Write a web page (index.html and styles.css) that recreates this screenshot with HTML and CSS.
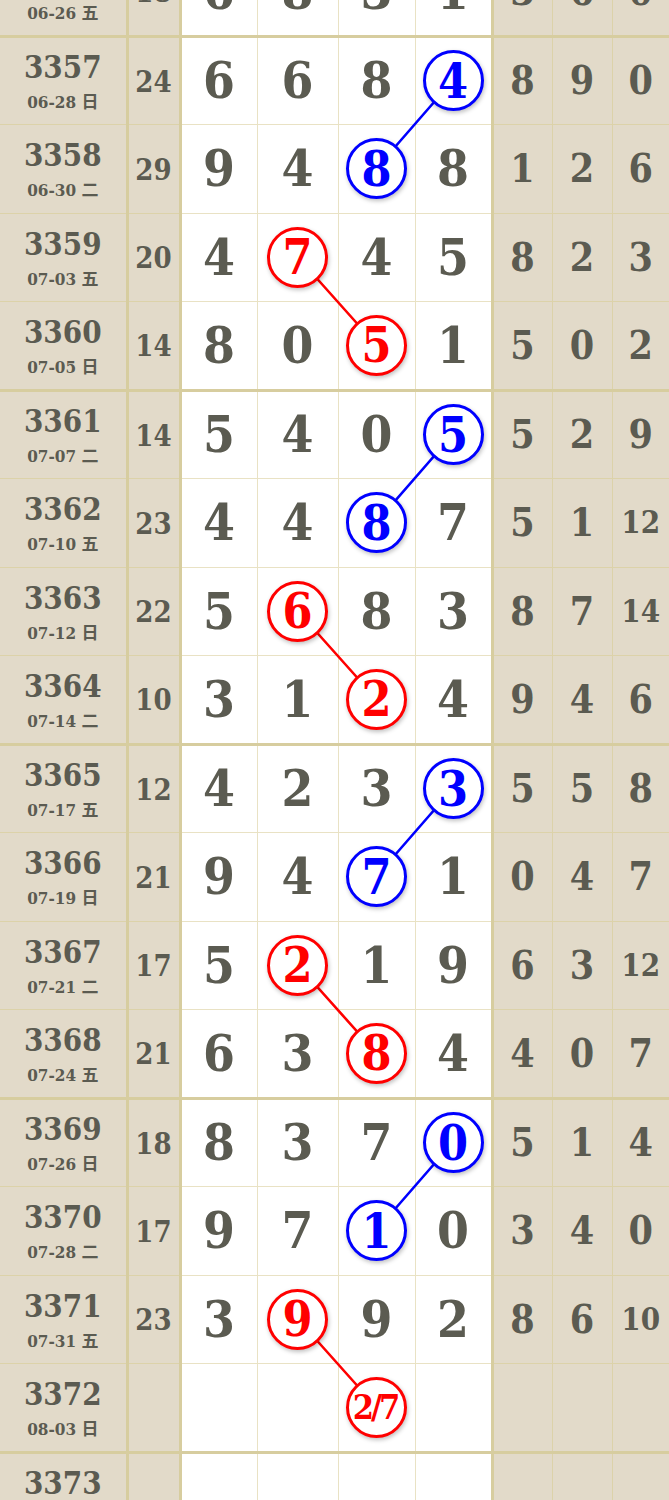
FILE: index.html
```html
<!DOCTYPE html>
<html lang="zh">
<head>
<meta charset="utf-8">
<title>走势图</title>
<link rel="stylesheet" href="styles.css">
</head>
<body>
<div class="viewport">
  <div class="board">
    <table class="chart">
      <colgroup>
        <col class="c-issue"><col class="c-sum"><col class="c-a"><col class="c-b"><col class="c-c"><col class="c-d"><col class="c-e"><col class="c-f"><col class="c-g">
      </colgroup>
      <tbody>
        <tr class="g"><td class="issue"><div class="no">3356</div><div class="dt">06-26 <span class="wk">五</span></div></td><td class="sum">18</td><td class="n">6</td><td class="n">8</td><td class="n">3</td><td class="n">1</td><td class="r">3</td><td class="r">6</td><td class="r">0</td></tr>
        <tr><td class="issue"><div class="no">3357</div><div class="dt">06-28 <span class="wk">日</span></div></td><td class="sum">24</td><td class="n">6</td><td class="n">6</td><td class="n">8</td><td class="n"><span class="ball blue">4</span></td><td class="r">8</td><td class="r">9</td><td class="r">0</td></tr>
        <tr><td class="issue"><div class="no">3358</div><div class="dt">06-30 <span class="wk">二</span></div></td><td class="sum">29</td><td class="n">9</td><td class="n">4</td><td class="n"><span class="ball blue">8</span></td><td class="n">8</td><td class="r">1</td><td class="r">2</td><td class="r">6</td></tr>
        <tr><td class="issue"><div class="no">3359</div><div class="dt">07-03 <span class="wk">五</span></div></td><td class="sum">20</td><td class="n">4</td><td class="n"><span class="ball red">7</span></td><td class="n">4</td><td class="n">5</td><td class="r">8</td><td class="r">2</td><td class="r">3</td></tr>
        <tr class="g"><td class="issue"><div class="no">3360</div><div class="dt">07-05 <span class="wk">日</span></div></td><td class="sum">14</td><td class="n">8</td><td class="n">0</td><td class="n"><span class="ball red">5</span></td><td class="n">1</td><td class="r">5</td><td class="r">0</td><td class="r">2</td></tr>
        <tr><td class="issue"><div class="no">3361</div><div class="dt">07-07 <span class="wk">二</span></div></td><td class="sum">14</td><td class="n">5</td><td class="n">4</td><td class="n">0</td><td class="n"><span class="ball blue">5</span></td><td class="r">5</td><td class="r">2</td><td class="r">9</td></tr>
        <tr><td class="issue"><div class="no">3362</div><div class="dt">07-10 <span class="wk">五</span></div></td><td class="sum">23</td><td class="n">4</td><td class="n">4</td><td class="n"><span class="ball blue">8</span></td><td class="n">7</td><td class="r">5</td><td class="r">1</td><td class="r two">12</td></tr>
        <tr><td class="issue"><div class="no">3363</div><div class="dt">07-12 <span class="wk">日</span></div></td><td class="sum">22</td><td class="n">5</td><td class="n"><span class="ball red">6</span></td><td class="n">8</td><td class="n">3</td><td class="r">8</td><td class="r">7</td><td class="r two">14</td></tr>
        <tr class="g"><td class="issue"><div class="no">3364</div><div class="dt">07-14 <span class="wk">二</span></div></td><td class="sum">10</td><td class="n">3</td><td class="n">1</td><td class="n"><span class="ball red">2</span></td><td class="n">4</td><td class="r">9</td><td class="r">4</td><td class="r">6</td></tr>
        <tr><td class="issue"><div class="no">3365</div><div class="dt">07-17 <span class="wk">五</span></div></td><td class="sum">12</td><td class="n">4</td><td class="n">2</td><td class="n">3</td><td class="n"><span class="ball blue">3</span></td><td class="r">5</td><td class="r">5</td><td class="r">8</td></tr>
        <tr><td class="issue"><div class="no">3366</div><div class="dt">07-19 <span class="wk">日</span></div></td><td class="sum">21</td><td class="n">9</td><td class="n">4</td><td class="n"><span class="ball blue">7</span></td><td class="n">1</td><td class="r">0</td><td class="r">4</td><td class="r">7</td></tr>
        <tr><td class="issue"><div class="no">3367</div><div class="dt">07-21 <span class="wk">二</span></div></td><td class="sum">17</td><td class="n">5</td><td class="n"><span class="ball red">2</span></td><td class="n">1</td><td class="n">9</td><td class="r">6</td><td class="r">3</td><td class="r two">12</td></tr>
        <tr class="g"><td class="issue"><div class="no">3368</div><div class="dt">07-24 <span class="wk">五</span></div></td><td class="sum">21</td><td class="n">6</td><td class="n">3</td><td class="n"><span class="ball red">8</span></td><td class="n">4</td><td class="r">4</td><td class="r">0</td><td class="r">7</td></tr>
        <tr><td class="issue"><div class="no">3369</div><div class="dt">07-26 <span class="wk">日</span></div></td><td class="sum">18</td><td class="n">8</td><td class="n">3</td><td class="n">7</td><td class="n"><span class="ball blue">0</span></td><td class="r">5</td><td class="r">1</td><td class="r">4</td></tr>
        <tr><td class="issue"><div class="no">3370</div><div class="dt">07-28 <span class="wk">二</span></div></td><td class="sum">17</td><td class="n">9</td><td class="n">7</td><td class="n"><span class="ball blue">1</span></td><td class="n">0</td><td class="r">3</td><td class="r">4</td><td class="r">0</td></tr>
        <tr><td class="issue"><div class="no">3371</div><div class="dt">07-31 <span class="wk">五</span></div></td><td class="sum">23</td><td class="n">3</td><td class="n"><span class="ball red">9</span></td><td class="n">9</td><td class="n">2</td><td class="r">8</td><td class="r">6</td><td class="r two">10</td></tr>
        <tr class="g"><td class="issue"><div class="no">3372</div><div class="dt">08-03 <span class="wk">日</span></div></td><td class="sum"></td><td class="n"></td><td class="n"></td><td class="n"><span class="ball red pair">2/7</span></td><td class="n"></td><td class="r"></td><td class="r"></td><td class="r"></td></tr>
        <tr><td class="issue"><div class="no">3373</div><div class="dt">08-05 <span class="wk">二</span></div></td><td class="sum"></td><td class="n"></td><td class="n"></td><td class="n"></td><td class="n"></td><td class="r"></td><td class="r"></td><td class="r"></td></tr>
      </tbody>
    </table>
    <svg class="links" width="669" height="1593" viewBox="0 0 669 1593" aria-hidden="true">
      <g stroke="#0000ff" stroke-width="2.6" stroke-linecap="round">
        <line x1="453.5" y1="132.75" x2="376.5" y2="221.25"/>
        <line x1="453.5" y1="486.75" x2="376.5" y2="575.25"/>
        <line x1="453.5" y1="840.75" x2="376.5" y2="929.25"/>
        <line x1="453.5" y1="1194.75" x2="376.5" y2="1283.25"/>
      </g>
      <g stroke="#ff0000" stroke-width="2.6" stroke-linecap="round">
        <line x1="297.5" y1="309.75" x2="376.5" y2="398.25"/>
        <line x1="297.5" y1="663.75" x2="376.5" y2="752.25"/>
        <line x1="297.5" y1="1017.75" x2="376.5" y2="1106.25"/>
        <line x1="297.5" y1="1371.75" x2="376.5" y2="1460.25"/>
      </g>
    </svg>
  </div>
</div>
</body>
</html>
```

FILE: styles.css
```css
html, body {
  margin: 0;
  padding: 0;
  background: #ffffff;
}

.viewport {
  width: 669px;
  height: 1500px;
  overflow: hidden;
}

.board {
  position: relative;
  width: 669px;
  margin-top: -53px;
}

.chart {
  width: 669px;
  table-layout: fixed;
  border-collapse: collapse;
  font-family: "DejaVu Serif", "Liberation Serif", "Noto Sans CJK SC", serif;
  font-stretch: condensed;
  font-weight: bold;
  color: #5b5b51;
}

.c-issue { width: 127px; }
.c-sum { width: 53px; }
.c-a { width: 77px; }
.c-b { width: 81px; }
.c-c { width: 77px; }
.c-d { width: 77px; }
.c-e { width: 60px; }
.c-f { width: 60px; }
.c-g { width: 57px; }

.chart td {
  height: 88.5px;
  padding: 0;
  text-align: center;
  vertical-align: middle;
  box-sizing: border-box;
  border: 1px solid #e9e2c4;
  line-height: 1;
}

.chart td.issue,
.chart td.sum,
.chart td.r {
  background: #e2dac9;
  border-color: #dcd2a9;
}

.chart td.n {
  background: #ffffff;
}

.chart td.issue {
  padding-top: 6px;
  border-left: none;
  border-right: 3px solid #d7cd9f;
}

.chart td.sum {
  padding-top: 3px;
  border-right: 3px solid #d7cd9f;
}

.chart td.n:nth-child(6) {
  border-right: 3px solid #d7cd9f;
}

.chart td.r:last-child {
  border-right: none;
}

.chart tr.g td {
  border-bottom: 3px solid #d7cd9f;
}

.issue .no {
  font-size: 31px;
  line-height: 32px;
  margin-top: -4px;
}

.issue .dt {
  font-size: 17px;
  line-height: 20px;
  margin-top: 8px;
}

.issue .wk {
  font-family: "Noto Sans CJK SC", sans-serif;
  font-weight: bold;
}

.sum {
  font-size: 29px;
}

.n {
  font-size: 51px;
}

.r {
  font-size: 39px;
}

.r.two {
  font-size: 31px;
}

.ball {
  position: relative;
  z-index: 2;
  display: inline-flex;
  align-items: center;
  justify-content: center;
  width: 61px;
  height: 61px;
  box-sizing: border-box;
  border-radius: 50%;
  border: 3px solid currentColor;
  background: #ffffff;
  box-shadow: 1px 2px 4px rgba(0, 0, 0, 0.25);
  font-size: 48px;
  line-height: 1;
  vertical-align: middle;
}

.ball.blue { color: #0000ff; }
.ball.red { color: #ff0000; }

.ball.pair {
  font-size: 34px;
  letter-spacing: -3px;
  padding-right: 3px;
}

.links {
  position: absolute;
  left: 0;
  top: 0;
  z-index: 1;
  pointer-events: none;
}
```
